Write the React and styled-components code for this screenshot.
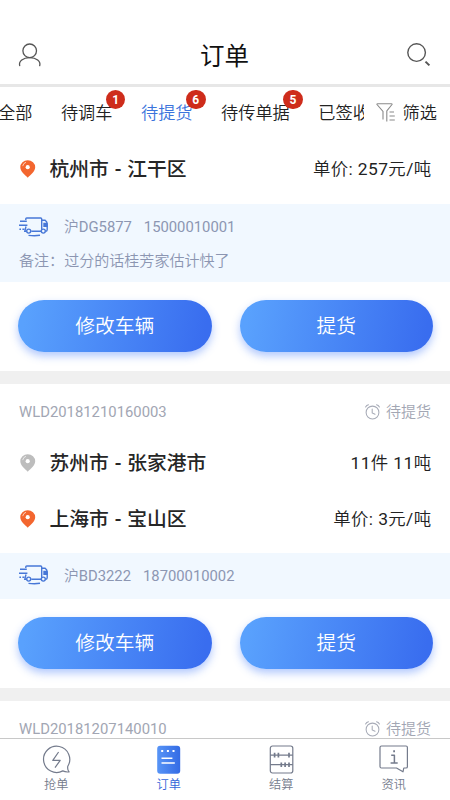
import styled, { createGlobalStyle } from "styled-components";

const GlobalStyle = createGlobalStyle`
  * {
    box-sizing: border-box;
  }
  body {
    margin: 0;
    background: #fff;
    font-family: Roboto, "Noto Sans CJK SC DemiLight", "Noto Sans CJK SC", sans-serif;
  }
  button {
    font-family: inherit;
    border: 0;
    padding: 0;
    background: none;
  }
  svg {
    display: block;
    flex: none;
  }
`

const Screen = styled.div`
  width: 450px;
  height: 800px;
  display: flex;
  flex-direction: column;
  overflow: hidden;
  white-space: nowrap;
`

const Header = styled.header`
  height: 87px;
  padding: 27px 18px 0 17px;
  display: flex;
  align-items: center;
  justify-content: space-between;
  border-bottom: 3px solid #e7e7e7;
  flex: none;
`

const Title = styled.h1`
  margin: 0;
  padding-bottom: 2px;
  font-family: "Noto Sans CJK SC", sans-serif;
  font-size: 24.5px;
  font-weight: 400;
  line-height: 36px;
  color: #111;
`

const TabBar = styled.nav`
  height: 51px;
  display: flex;
  align-items: center;
  flex: none;
  color: #222;
  font-size: 17.2px;
  font-weight: 350;
  line-height: 26px;
`

const TabList = styled.div`
  width: 364px;
  height: 51px;
  display: flex;
  align-items: center;
  gap: 28.5px;
  overflow: hidden;
`

const Tab = styled.span`
  position: relative;
  flex: none;
  color: ${({ $active }) => ($active ? "#3b74dc" : "#222")};

  &:first-child {
    margin-left: -2px;
  }
`

const Badge = styled.span`
  position: absolute;
  top: -10px;
  right: -13px;
  width: 19.5px;
  height: 19.5px;
  border-radius: 50%;
  background: #ce2c1b;
  color: #fff;
  font-size: 12px;
  font-weight: 700;
  line-height: 20px;
  text-align: center;
`

const Filter = styled.div`
  display: flex;
  align-items: center;
  gap: 6.5px;
  padding-left: 12px;
`

const Orders = styled.main`
  flex: 1;
  min-height: 0;
  overflow: hidden;
  background: #f0f0f0;
`

const Card = styled.section`
  background: #fff;
  margin-bottom: 13px;
`

const CardHead = styled.div`
  height: 56px;
  padding: 0 19px;
  display: flex;
  align-items: center;
  justify-content: space-between;
  font-size: 15px;
  line-height: 22px;
  color: #a2a6b3;
`

const OrderNo = styled.span`
  font-size: 14.85px;
`

const Status = styled.span`
  display: flex;
  align-items: center;
  gap: 6px;
`

const Place = styled.div`
  height: ${({ $height }) => $height}px;
  padding: 0 18.5px ${({ $lift }) => $lift}px 20px;
  display: flex;
  align-items: center;
`

const City = styled.span`
  flex: 1;
  margin-left: 14px;
  padding-top: 2px;
  font-family: Roboto, "Noto Sans CJK SC", sans-serif;
  font-size: 19.75px;
  font-weight: 500;
  line-height: 28px;
  word-spacing: 1px;
  color: #262626;
`

const Amount = styled.span`
  font-size: 17.4px;
  letter-spacing: 0.4px;
  line-height: 26px;
  color: #222;
`

const Transport = styled.div`
  background: #f1f8ff;
  padding: ${({ $note }) => ($note ? "7px" : "6px")} 19px ${({ $note }) => ($note ? "5.5px" : "7px")};
  color: #8c96b2;
  font-size: 14.8px;
  line-height: 33px;
`

const Truck = styled.div`
  display: flex;
  align-items: center;
  height: 33px;

  svg {
    margin-bottom: 1px;
  }
`

const Plate = styled.span`
  margin-left: 16px;
  padding-top: 1px;
`

const Phone = styled.span`
  margin-left: 12px;
  padding-top: 1px;
`

const Note = styled.div`
  padding-top: 1px;
  margin-bottom: -1px;
  font-size: 15.05px;
`

const Actions = styled.div`
  display: flex;
  gap: 28px;
  padding: 17.5px 17px 19px 18px;
`

const Action = styled.button`
  flex: 1;
  height: 52.5px;
  padding-top: 2px;
  border-radius: 27px;
  background: linear-gradient(100deg, #59a1fd 5%, #396def 95%);
  box-shadow: 0 4px 8px rgba(70, 125, 250, 0.42);
  color: #fff;
  font-size: 19.8px;
  font-weight: 350;
  line-height: 50px;
`

const Footer = styled.footer`
  height: 62px;
  flex: none;
  display: flex;
  background: #fff;
  border-top: 1px solid #c8c8c8;
`

const NavItem = styled.div`
  flex: 1;
  display: flex;
  flex-direction: column;
  align-items: center;
  padding-top: 6px;
  font-size: 12.2px;
  font-weight: 350;
  line-height: 18px;
  color: ${({ $active }) => ($active ? "#3567d9" : "#747b8c")};

  span {
    margin-top: 2px;
  }
`

const UserIcon = () => (
  <svg width="26" height="26" viewBox="0 0 26 26" fill="none" stroke="#555" strokeWidth="1.3" strokeLinecap="round">
    <circle cx="12.7" cy="7.8" r="6.8" />
    <path d="M2.7 22.7C1.5 18.3 6 14.6 12.7 14.6S24 18.3 22.7 22.7" />
  </svg>
)

const SearchIcon = () => (
  <svg width="26" height="26" viewBox="0 0 26 26" fill="none" stroke="#555">
    <circle cx="10.6" cy="9.6" r="8.8" strokeWidth="1.4" />
    <path d="M19.5 18.6l3.9 3.8" strokeWidth="2" />
  </svg>
)

const FilterIcon = () => (
  <svg width="20" height="20" viewBox="0 0 20 20" fill="none" stroke="#8a8a8a" strokeWidth="1.1">
    <path d="M7 16.5V8.5L1 1.5Q.5.8 1.5.8H15.5Q16.5.8 16 1.5L10.8 8V18.4" />
    <path d="M13.5 9H18M13.5 13H18.8M13.5 17H18.8" />
  </svg>
)

const Pin = ({ color }) => (
  <svg width="15.5" height="18" viewBox="0 0 15.5 18">
    <path d="M7.75 17.7C5 15 .3 11.5.3 7.3a7.45 7.1 0 0 1 14.9 0C15.2 11.5 10.5 15 7.75 17.7Z" fill={color} />
    <circle cx="7.7" cy="7.2" r="2.1" fill="#fff" />
    <path d="M2.7 6.1Q3.3 3.1 6 2.3" fill="none" stroke="#fff" strokeWidth=".9" opacity=".75" />
  </svg>
)

const TruckIcon = () => (
  <svg width="29" height="20" viewBox="0 0 29 20" fill="none" stroke="#4777d7" strokeWidth="1.4">
    <path d="M6.8 3V1.8Q6.8 1 7.8 1H21.7Q22.7 1 22.7 2V14.2H12.3M7.5 14.2H5.8L7 9.5" />
    <path d="M22.7 3.2H26Q28.4 4.5 28.2 8V12.6Q28.2 14.2 27 14.2" />
    <path d="M25 6.5V9.2H28V6.5Z" fill="#4777d7" />
    <circle cx="9.7" cy="14.1" r="2" fill="#f1f8ff" />
    <circle cx="24.3" cy="14.1" r="2" fill="#f1f8ff" />
    <path d="M1 4.2H7.8M0 8.2H8.4M.4 12.2H2M3.4 12.2H5.5M9.5 18.4Q16 19.2 21 18.3" />
  </svg>
)

const ClockIcon = () => (
  <svg width="15" height="16" viewBox="0 0 15 16" fill="none" stroke="#a7abb7" strokeWidth="1.05" strokeLinecap="round">
    <circle cx="7.5" cy="8.5" r="6.4" />
    <path d="M7.2 5V9L10 10.2M.6 3Q1.5 1.2 3.5.8M11.5.8Q13.5 1.2 14.4 3" />
  </svg>
)

const GrabIcon = () => (
  <svg width="29" height="29" viewBox="0 0 29 29" fill="none" stroke="#747b8c" strokeWidth="1.2" strokeLinejoin="round">
    <path d="M20.8 25.9A13.1 13.1 0 1 1 25.8 21.2Q25.2 25 27.1 26.9Q23.5 27.3 20.8 25.9Z" />
    <path d="M16.6 7L10.8 15.4H18.2L13 22.6" />
  </svg>
)

const OrdersIcon = () => (
  <svg width="29" height="29" viewBox="0 0 29 29">
    <defs>
      <linearGradient id="orders" x1="0" x2="1">
        <stop stopColor="#5794f6" />
        <stop offset="1" stopColor="#346be5" />
      </linearGradient>
    </defs>
    <rect x="3.2" y=".8" width="23" height="28" rx="3" fill="url(#orders)" />
    <path d="M7.2 6H9.2M12.9 6H14.9M18.5 6H20.5" stroke="#fff" strokeWidth="2" />
    <path d="M7.5 13.3H18.4M7.5 18H20.8" stroke="#fff" strokeWidth="1.5" />
  </svg>
)

const AbacusIcon = () => (
  <svg width="29" height="29" viewBox="0 0 29 29" fill="none" stroke="#747b8c" strokeWidth="1.2">
    <rect x="3.3" y="1" width="22.5" height="27" rx="2.2" />
    <path d="M3.3 10.1H25.8M3.3 19.7H25.8" />
    <path d="M7.6 7.8V12.4M11.4 7.8V12.4M22 7.8V12.4M14.3 17.4V22M18.1 17.4V22M22 17.4V22" strokeWidth="1.7" />
  </svg>
)

const NewsIcon = () => (
  <svg width="29" height="29" viewBox="0 0 29 29" fill="none" stroke="#747b8c" strokeWidth="1.2" strokeLinejoin="round">
    <path d="M2.5 1H27Q28.4 1 28.4 2.4V21.7Q28.4 23 27 23H24.8L24 26.8L17.5 23H2.5Q1 23 1 21.6V2.4Q1 1 2.5 1Z" />
    <path d="M12.2 10.3H15.4V17.8M11.6 18H18.7" strokeWidth="1.5" />
    <path d="M14.2 6.3H16" strokeWidth="1.9" />
  </svg>
)

const tabs = [
  { label: "全部" },
  { label: "待调车", count: 1 },
  { label: "待提货", count: 6, active: true },
  { label: "待传单据", count: 5 },
  { label: "已签收" },
]

const navItems = [
  { label: "抢单", Icon: GrabIcon },
  { label: "订单", Icon: OrdersIcon, active: true },
  { label: "结算", Icon: AbacusIcon },
  { label: "资讯", Icon: NewsIcon },
]

const OrderHead = ({ number }) => (
  <CardHead>
    <OrderNo>{number}</OrderNo>
    <Status>
      <ClockIcon />
      待提货
    </Status>
  </CardHead>
)

const OrderPlace = ({ from, city, amount, height, lift = 0 }) => (
  <Place $height={height} $lift={lift}>
    <Pin color={from ? "#bdbdbd" : "#f3662f"} />
    <City>{city}</City>
    <Amount>{amount}</Amount>
  </Place>
)

const OrderTransport = ({ plate, phone, note }) => (
  <Transport $note={Boolean(note)}>
    <Truck>
      <TruckIcon />
      <Plate>{plate}</Plate>
      <Phone>{phone}</Phone>
    </Truck>
    {note && <Note>备注：{note}</Note>}
  </Transport>
)

const OrderActions = () => (
  <Actions>
    <Action>修改车辆</Action>
    <Action>提货</Action>
  </Actions>
)

const App = () => (
  <>
    <GlobalStyle />
    <Screen>
      <Header>
        <UserIcon />
        <Title>订单</Title>
        <SearchIcon />
      </Header>
      <TabBar>
        <TabList>
          {tabs.map(({ label, count, active }) => (
            <Tab key={label} $active={active}>
              {label}
              {count && <Badge>{count}</Badge>}
            </Tab>
          ))}
        </TabList>
        <Filter>
          <FilterIcon />
          筛选
        </Filter>
      </TabBar>
      <Orders>
        <Card>
          <OrderPlace city="杭州市 - 江干区" amount="单价: 257元/吨" height={65.5} lift={4} />
          <OrderTransport plate="沪DG5877" phone="15000010001" note="过分的话桂芳家估计快了" />
          <OrderActions />
        </Card>
        <Card>
          <OrderHead number="WLD20181210160003" />
          <OrderPlace from city="苏州市 - 张家港市" amount="11件 11吨" height={46} />
          <OrderPlace city="上海市 - 宝山区" amount="单价: 3元/吨" height={67} lift={2} />
          <OrderTransport plate="沪BD3222" phone="18700010002" />
          <OrderActions />
        </Card>
        <Card>
          <OrderHead number="WLD20181207140010" />
        </Card>
      </Orders>
      <Footer>
        {navItems.map(({ label, Icon, active }) => (
          <NavItem key={label} $active={active}>
            <Icon />
            <span>{label}</span>
          </NavItem>
        ))}
      </Footer>
    </Screen>
  </>
)

export default App
